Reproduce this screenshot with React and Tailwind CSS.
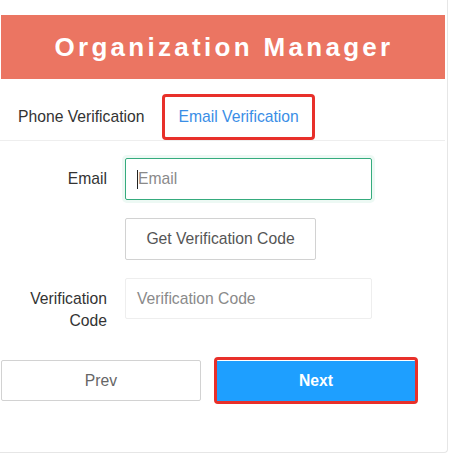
import React from 'react'

const App = () => {
    return (
        <div className="w-[449px] h-[454px] bg-white font-['Liberation_Sans',Arial,sans-serif] text-[15.7px]">
            <div className="w-[448px] h-[453px] border-r border-b border-[#e6e6e6] rounded-br-[4px] pt-[15px]">
                {/* Header */}
                <div className="ml-[1px] w-[444px] h-[64px] bg-[#eb7562] flex items-center justify-center">
                    <h1 className="text-white font-bold text-[26px] tracking-[3.3px] leading-none pl-[2px]">
                        Organization Manager
                    </h1>
                </div>

                {/* Tabs */}
                <div className="w-[445px] pt-[15px] border-b border-[#eeeeee] flex items-start">
                    <div className="h-[46px] pl-[18px] flex items-center text-[#333]">
                        Phone Verification
                    </div>
                    <div className="ml-[18px] h-[46px] px-[13px] border-[3px] border-[#e8302a] rounded-[4px] flex items-center text-[#3a8ee6]">
                        Email Verification
                    </div>
                </div>

                {/* Form */}
                <div className="pt-[17px]">
                    <div className="flex items-center">
                        <div className="w-[107px] text-right text-[#333]">Email</div>
                        <div className="ml-[18px] w-[247px] h-[42px] border border-[#35ab7d] rounded-[2px] shadow-[0_0_0_3px_rgba(22,183,119,0.08)] pl-[11px] flex items-center">
                            <span className="w-px h-[19px] bg-[#222]"></span>
                            <span className="text-[#8a8a8a]">Email</span>
                        </div>
                    </div>

                    <div className="mt-[18px] ml-[125px]">
                        <button className="w-[191px] h-[42px] border border-[#d2d2d2] rounded-[2px] bg-white text-[#555]">
                            Get Verification Code
                        </button>
                    </div>

                    <div className="mt-[18px] flex items-start">
                        <div className="w-[107px] pt-[10px] text-right text-[#333] leading-[22px]">
                            Verification<br />Code
                        </div>
                        <div className="ml-[18px] w-[247px] h-[41px] border border-[#eeeeee] rounded-[2px] pl-[11px] flex items-center text-[#8a8a8a]">
                            Verification Code
                        </div>
                    </div>
                </div>

                {/* Actions */}
                <div className="mt-[25px] flex items-center">
                    <button className="ml-[1px] w-[200px] h-[41px] border border-[#d2d2d2] rounded-[2px] bg-white text-[#666]">
                        Prev
                    </button>
                    <div className="ml-[13px] border-[3px] border-[#e8302a] rounded-[4px] pt-[1px]">
                        <button className="w-[198px] h-[40px] bg-[#1e9fff] text-white font-bold block">
                            Next
                        </button>
                    </div>
                </div>
            </div>
        </div>
    )
}

export default App
